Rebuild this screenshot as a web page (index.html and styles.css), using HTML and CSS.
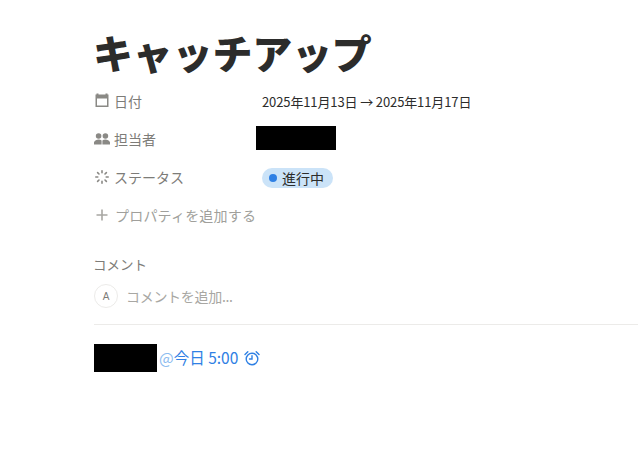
FILE: index.html
```html
<!DOCTYPE html>
<html lang="ja">
<head>
    <meta charset="UTF-8">
    <meta name="viewport" content="width=device-width, initial-scale=1.0">
    <title>キャッチアップ</title>
    <link rel="stylesheet" href="styles.css">
</head>
<body>
    <main class="page">
        <h1 class="title">キャッチアップ</h1>
        <div class="props">
            <div class="prop">
                <div class="prop-name">
                    <svg class="icon" viewBox="0 0 16 16"><path fill="#8a8985" d="M2.500 .5h2v1h7v-1h2v1h1V14h-13V1.500h1zM3 5.500V12.500h10V5.500z"/></svg>
                    <span>日付</span>
                </div>
                <div class="prop-value">2025年11月13日 → 2025年11月17日</div>
            </div>
            <div class="prop">
                <div class="prop-name">
                    <svg class="icon" viewBox="0 0 16 16"><circle cx="4.600" cy="5" r="2.800" fill="#8a8985"/><circle cx="11.400" cy="5" r="2.800" fill="#8a8985"/><path fill="#8a8985" d="M-.500 13.500c0-3.200 2.300-5 5.100-5 1.200 0 2.300.3 3 .9v4.100zM8.400 9.400c.7-.6 1.800-.9 3-.9 2.800 0 5.100 1.800 5.100 5H8.400z"/></svg>
                    <span>担当者</span>
                </div>
                <div class="prop-value"><div class="redacted-person"></div></div>
            </div>
            <div class="prop">
                <div class="prop-name">
                    <svg class="icon" viewBox="0 0 16 16" stroke="#8a8985" stroke-width="1.600" stroke-linecap="round"><path d="M8 1.800v2M12.400 3.600l-1.400 1.400M14.200 8h-2M12.400 12.400 11 11M8 14.200v-2M3.600 12.400 5 11M1.800 8h2M3.600 3.600 5 5"/></svg>
                    <span>ステータス</span>
                </div>
                <div class="prop-value">
                    <span class="status"><span class="status-dot"></span>進行中</span>
                </div>
            </div>
            <div class="prop prop-add">
                <div class="prop-name">
                    <svg class="icon" viewBox="0 0 16 16"><path fill="#a8a7a3" d="M7.200 2.500h1.600v4.700h4.700v1.600H8.800v4.700H7.200V8.800H2.500V7.200h4.700z"/></svg>
                    <span>プロパティを追加する</span>
                </div>
            </div>
        </div>
        <section class="comments">
            <h2 class="comments-label">コメント</h2>
            <div class="comment-input">
                <div class="avatar">A</div>
                <span>コメントを追加...</span>
            </div>
        </section>
        <div class="reminder">
            <div class="redacted-name"></div>
            <span class="mention"><span class="at">@</span>今日 5:00</span>
            <svg class="alarm" viewBox="0 0 16 16" fill="none" stroke="#2f80e4" stroke-width="1.400" stroke-linecap="round"><circle cx="8" cy="9" r="5.800"/><path d="M8 5.800V9H5.500M1 4.600 3.800 1.800M15 4.600 12.200 1.800"/></svg>
        </div>
    </main>
</body>
</html>
```

FILE: styles.css
```css
body {
    margin: 0;
    background: #fff;
    font-family: "Noto Sans CJK JP", "Liberation Sans", sans-serif;
    color: #2c2c2b;
    overflow: hidden;
}
.page {
    padding-left: 94px;
}
.title {
    margin: 0 0 0 -1px;
    padding-top: 23px;
    height: 59px;
    font-size: 40px;
    line-height: 59px;
    font-weight: 900;
    letter-spacing: -0.2px;
}
.prop {
    display: flex;
    align-items: center;
    height: 38px;
}
.prop-name {
    display: flex;
    align-items: center;
    gap: 4px;
    width: 168px;
    font-size: 14px;
    color: #7d7c78;
}
.icon {
    width: 16px;
    height: 16px;
    flex: none;
}
.prop-value {
    font-size: 13px;
    letter-spacing: -0.12px;
    color: #2c2c2b;
}
.prop-add .prop-name {
    width: auto;
    gap: 5px;
    letter-spacing: 0.2px;
    color: #a09f9b;
}
.redacted-person {
    width: 80px;
    height: 24px;
    margin: 0 0 2px -6px;
    background: #000;
}
.status {
    display: inline-flex;
    align-items: center;
    gap: 5px;
    height: 20px;
    padding: 0 9px 0 7px;
    border-radius: 10px;
    background: #cbe3f8;
    font-size: 14px;
    letter-spacing: 0;
}
.status-dot {
    width: 8px;
    height: 8px;
    border-radius: 50%;
    background: #2f80e4;
}
.comments {
    margin-top: 20px;
    padding-bottom: 16px;
    border-bottom: 1px solid #ecebe9;
}
.comments-label {
    margin: 0 0 0 -1px;
    height: 20px;
    font-size: 13.500px;
    line-height: 20px;
    font-weight: 400;
    color: #7d7c78;
}
.comment-input {
    display: flex;
    align-items: center;
    gap: 8px;
    margin-top: 10px;
    font-size: 14px;
    letter-spacing: -0.3px;
    color: #a8a7a3;
}
.avatar {
    display: flex;
    align-items: center;
    justify-content: center;
    width: 22px;
    height: 22px;
    border: 1px solid #ecebe9;
    border-radius: 50%;
    font-family: "Liberation Sans", sans-serif;
    font-size: 10px;
    color: #7d7c78;
}
.reminder {
    display: flex;
    align-items: center;
    gap: 2px;
    margin-top: 19px;
    font-size: 15.500px;
    color: #2f80e4;
}
.redacted-name {
    width: 63px;
    height: 28px;
    background: #000;
}
.mention {
    margin-bottom: 2px;
}
.at {
    color: #8cbcf0;
}
.alarm {
    width: 16px;
    height: 16px;
    margin-left: 4px;
}
```
